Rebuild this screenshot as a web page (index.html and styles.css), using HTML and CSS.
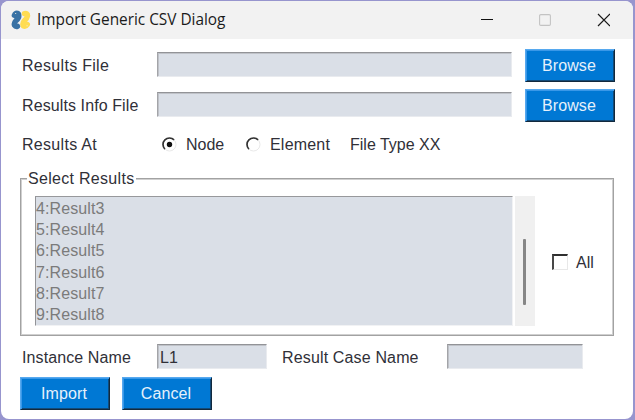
FILE: index.html
```html
<!DOCTYPE html>
<html lang="en">
<head>
<meta charset="utf-8">
<title>Import Generic CSV Dialog</title>
<link rel="stylesheet" href="styles.css">
</head>
<body>
<main class="window">
  <header class="titlebar">
    <svg class="logo" width="20" height="20" viewBox="0 0 20 20">
      <g fill="none" stroke-linecap="round" stroke-linejoin="round" stroke-width="5.4">
        <path stroke="#ffdc52" d="M13.4 3.6Q16.8 3 16.5 6Q16 8.5 13.5 10.5Q11.2 13 12.2 15.8Q14.5 17 16.3 14.4"/>
        <path stroke="#3972a4" d="M3.4 5.4Q4.5 3 6.5 3.4Q8.1 4 7.7 7Q7 9 4.8 10.8Q2.7 13 3.5 15.3Q4.5 16.8 6.5 16.3"/>
      </g>
      <path fill="none" stroke="#f2efdf" stroke-width=".8" d="M4 3.5h1.2M15.5 15.8h1.2"/>
    </svg>
    <h1 class="title">Import Generic CSV Dialog</h1>
    <svg class="controls" width="130" height="14" viewBox="0 0 130 14">
      <path d="M1 6.5h12" stroke="#111" fill="none"/>
      <rect x="59.6" y="1.6" width="10.8" height="10.8" rx="1.2" stroke="#c3c3c3" fill="none" stroke-width="1.1"/>
      <path d="M118 1l12 12M130 1l-12 12" stroke="#1a1a1a" fill="none" stroke-width="1.2"/>
    </svg>
  </header>
  <section class="content">
    <div class="row">
      <span class="label">Results File</span><span class="field wide"></span><button class="btn">Browse</button>
    </div>
    <div class="row second">
      <span class="label info">Results Info File</span><span class="field wide"></span><button class="btn">Browse</button>
    </div>
    <div class="row options">
      <span class="label">Results At</span>
      <svg class="radio" width="15" height="15" viewBox="0 0 15 15">
        <circle cx="7.5" cy="7.5" r="6.5" fill="#fff" stroke="#e8e8e8"/>
        <path d="M2.9 12.1A6.5 6.5 0 0 1 12.1 2.9" fill="none" stroke="#333" stroke-width="1.7"/>
        <circle cx="7.5" cy="7.5" r="2.7" fill="#111"/>
      </svg>
      <span class="node">Node</span>
      <svg class="radio" width="15" height="15" viewBox="0 0 15 15">
        <circle cx="7.5" cy="7.5" r="6.5" fill="#fff" stroke="#e8e8e8"/>
        <path d="M2.9 12.1A6.5 6.5 0 0 1 12.1 2.9" fill="none" stroke="#333" stroke-width="1.7"/>
      </svg>
      <span class="element">Element</span>
      <span class="type">File Type XX</span>
    </div>
    <fieldset class="group">
      <legend>Select Results</legend>
      <div class="group-body">
        <ul class="list">
          <li>4:Result3</li><li>5:Result4</li><li>6:Result5</li><li>7:Result6</li><li>8:Result7</li><li>9:Result8</li>
        </ul>
        <div class="scrollbar"><div class="thumb"></div></div>
        <span class="check"></span><span class="all">All</span>
      </div>
    </fieldset>
    <div class="row names">
      <span class="label instance">Instance Name</span><span class="field short">L1</span><span class="case">Result Case Name</span><span class="field medium"></span>
    </div>
    <div class="row actions">
      <button class="btn">Import</button><button class="btn">Cancel</button>
    </div>
  </section>
</main>
</body>
</html>
```

FILE: styles.css
```css
* { box-sizing: border-box; }
body {
  margin: 0;
  height: 420px;
  padding: 1px 2px 1px 1px;
  background: #9795ce;
  font: 16px/20px "Liberation Sans", Arial, sans-serif;
  color: #303038;
  overflow: hidden;
}
.window {
  height: 418px;
  border-radius: 8px;
  background: #fff;
  overflow: hidden;
}
.titlebar {
  display: flex;
  align-items: center;
  height: 38px;
  padding: 0 23px 0 10px;
  background: #f2f2f2;
}
.title {
  margin: 0 0 0 6px;
  font: 400 15.4px/22px "Open Sans", "Noto Sans", sans-serif;
  letter-spacing: -.02px;
  color: #1b1b1b;
  white-space: nowrap;
}
.controls { margin-left: auto; }
.content { padding: 10px 19px 0 19px; }
.row { display: flex; align-items: center; height: 33px; white-space: nowrap; }
.second { margin-top: 7px; }
.label { flex: none; width: 135px; margin-left: 2px; letter-spacing: .3px; }
.info { letter-spacing: .1px; }
.instance { letter-spacing: .1px; }
.field {
  flex: none;
  height: 25px;
  border: solid #e9ebef;
  border-width: 1px;
  border-top-color: #929397;
  border-left-color: #a3a4a8;
  box-shadow: inset 1px 1px #bfc2c8;
  background: #dadfe7;
}
.row:not(.names) .field { margin-bottom: 2px; }
.wide { width: 355px; margin-right: 13px; }
.btn {
  flex: none;
  width: 90px;
  height: 33px;
  padding: 0 2px 0 0;
  border: 1px solid;
  border-color: #57a9ef #12293d #12293d #57a9ef;
  box-shadow: inset 1px 1px #3a98e8, inset -1px -1px #124a78;
  background: #0078d4;
  color: #e6f1fb;
  font: inherit;
  letter-spacing: .1px;
}
.options { height: 20px; margin-top: 13px; }
.options .label { width: 140px; }
.radio { margin-bottom: 1px; }
.node { width: 60px; margin-left: 9px; }
.element { width: 80px; margin-left: 9px; letter-spacing: .2px; }
.group {
  height: 168px;
  margin: 13px 0 0;
  padding: 0;
  border: 1px solid #a2a2a2;
  box-shadow: inset 0 0 0 1px #d0d0d0;
  min-width: 0;
}
legend { height: 20px; margin-left: 6px; padding: 0 2px 0 1px; letter-spacing: .3px; line-height: 21px; background: #fff; }
.group-body { display: flex; align-items: center; height: 130px; margin: 8px 0 0 14px; }
.list {
  width: 478px;
  height: 130px;
  margin: 0 2px 0 0;
  padding: 0;
  border: solid #f1f2f4;
  border-width: 1px;
  border-top-color: #97989b;
  border-left-color: #929397;
  background: #dadfe7;
  color: #7b7b7b;
  line-height: 21.2px;
  letter-spacing: .1px;
  list-style: none;
}
.list li:first-child { margin-top: 1px; }
.scrollbar { width: 20px; height: 130px; padding: 43px 9px 0 8px; background: #f0f0f0; }
.thumb { width: 3px; height: 66px; border-radius: 1px; background: #868686; }
.check {
  width: 16px;
  height: 16px;
  margin: 2px 0 0 17px;
  border: 2px solid #e8e8e8;
  border-width: 2px 1px 1px 2px;
  border-top-color: #303030;
  border-left-color: #484848;
}
.all { margin: 3px 0 0 8px; }
.names { height: 25px; margin-top: 8px; }
.names .label, .case { padding-top: 2px; }
.short { width: 110px; padding-left: 2px; line-height: 25px; }
.case { width: 165px; margin-left: 15px; letter-spacing: .15px; }
.medium { width: 136px; }
.actions { gap: 12px; margin-top: 8px; }
```
